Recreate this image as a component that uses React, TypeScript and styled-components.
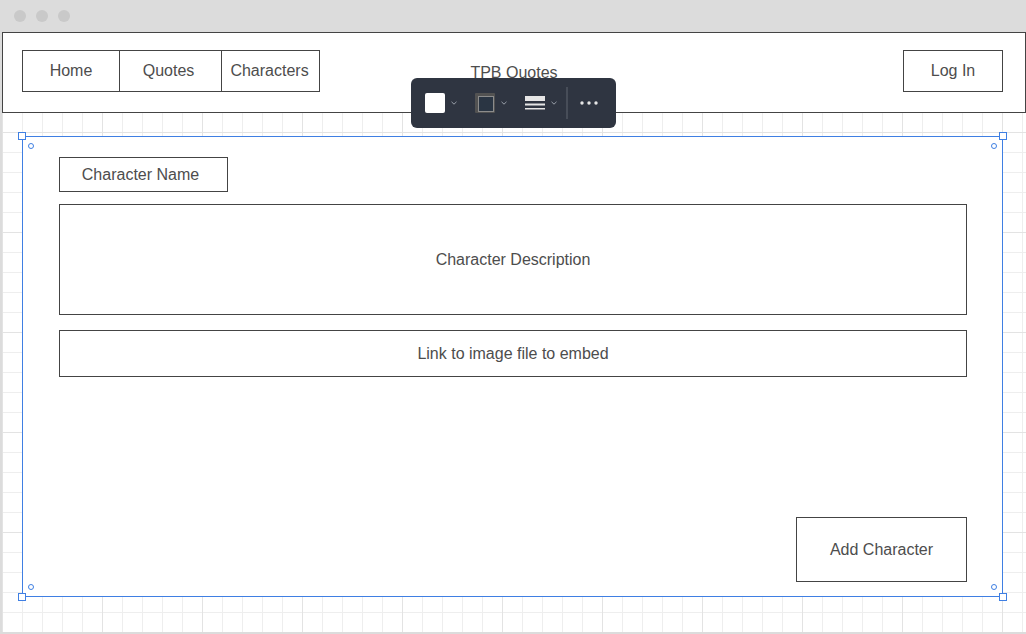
import styled, { createGlobalStyle } from "styled-components";

const GlobalStyle = createGlobalStyle`
  html, body {
    margin: 0;
    padding: 0;
    background: #ffffff;
  }
  * {
    box-sizing: border-box;
  }
`;

const Window = styled.div`
  width: 1026px;
  height: 634px;
  background: #dcdcdc;
  display: flex;
  flex-direction: column;
  padding: 0 0 2px 2px;
  font-family: "Liberation Sans", Arial, sans-serif;
  color: #4d4d4d;
  overflow: hidden;
`;

const TitleBar = styled.div`
  height: 32px;
  display: flex;
  align-items: center;
  gap: 10px;
  padding-left: 12px;
  padding-bottom: 1px;
  flex-shrink: 0;
`;

const Dot = styled.span`
  width: 12px;
  height: 12px;
  border-radius: 50%;
  background: #c9c9c9;
`;

const Canvas = styled.div`
  position: relative;
  flex: 1;
  display: flex;
  flex-direction: column;
  background-color: #ffffff;
  background-image:
    linear-gradient(to right, #e3e3e3 1px, transparent 1px),
    linear-gradient(to bottom, #e3e3e3 1px, transparent 1px),
    linear-gradient(to right, #eeeeee 1px, transparent 1px),
    linear-gradient(to bottom, #eeeeee 1px, transparent 1px);
  background-size: 100px 100px, 100px 100px, 20px 20px, 20px 20px;
  background-position: 0 0;
`;

const Header = styled.div`
  height: 81px;
  border: 1px solid #444444;
  background: #ffffff;
  display: flex;
  align-items: flex-start;
  justify-content: space-between;
  padding: 17px 22px 0 19px;
  position: relative;
  flex-shrink: 0;
`;

const Nav = styled.div`
  display: flex;
`;

const Box = styled.div<{ $w: number; $h: number }>`
  width: ${(p) => p.$w}px;
  height: ${(p) => p.$h}px;
  border: 1px solid #444444;
  background: #ffffff;
  display: flex;
  align-items: center;
  justify-content: center;
  font-size: 16px;
  color: #4d4d4d;
  flex-shrink: 0;
`;

const NavItem = styled(Box)<{ $shift?: number }>`
  padding-right: ${(p) => p.$shift ?? 0}px;
  & + & {
    margin-left: -1px;
  }
`;

const Title = styled.div`
  position: absolute;
  left: 0;
  right: 0;
  top: 0;
  bottom: 0;
  display: flex;
  align-items: center;
  justify-content: center;
  font-size: 16px;
  pointer-events: none;
`;

const Toolbar = styled.div`
  position: absolute;
  left: 409px;
  top: 46px;
  width: 205px;
  height: 50px;
  background: #2f3541;
  border-radius: 6px;
  display: flex;
  align-items: center;
  padding-left: 14px;
  z-index: 5;
`;

const ToolGroup = styled.div`
  display: flex;
  align-items: center;
  gap: 6px;
  margin-right: 18px;
  &:nth-of-type(3) {
    margin-right: 0;
  }
`;

const FillSwatch = styled.div`
  width: 20px;
  height: 20px;
  background: #ffffff;
  border-radius: 2px;
`;

const StrokeSwatch = styled.div`
  width: 20px;
  height: 20px;
  border-radius: 1px;
  background: #525252;
  padding: 3px;
  &::after {
    content: "";
    display: block;
    width: 100%;
    height: 100%;
    border: 1px solid #8c8c8c;
    background: #2a3543;
  }
`;

const Divider = styled.div`
  width: 2px;
  height: 32px;
  background: #474d58;
  margin: 0 12px 0 9px;
`;

const Chevron = () => (
  <svg width="6" height="4" viewBox="0 0 6 4">
    <path d="M0.5 0.8 L3 3.2 L5.5 0.8" fill="none" stroke="#9aa0aa" strokeWidth="1" />
  </svg>
);

const LinesIcon = () => (
  <svg width="20" height="16" viewBox="0 0 20 16">
    <rect x="0" y="1" width="20" height="5" fill="#e6e6e6" />
    <rect x="0" y="8.5" width="20" height="2" fill="#e6e6e6" />
    <rect x="0" y="13" width="20" height="1.5" fill="#e6e6e6" />
  </svg>
);

const DotsIcon = () => (
  <svg width="18" height="4" viewBox="0 0 18 4">
    <circle cx="2" cy="2" r="1.7" fill="#e6e6e6" />
    <circle cx="9" cy="2" r="1.7" fill="#e6e6e6" />
    <circle cx="16" cy="2" r="1.7" fill="#e6e6e6" />
  </svg>
);

const Frame = styled.div`
  position: relative;
  margin: 23px 0 0 20px;
  width: 981px;
  height: 461px;
  border: 1px solid #3f7fe3;
  background: #ffffff;
  display: flex;
  flex-direction: column;
  align-items: flex-start;
  padding: 20px 35px 14px 36px;
`;

const Handle = styled.span<{ $x: "left" | "right"; $y: "top" | "bottom" }>`
  position: absolute;
  width: 8px;
  height: 8px;
  border: 1px solid #3f7fe3;
  background: #ffffff;
  ${(p) => p.$x}: -5px;
  ${(p) => p.$y}: -5px;
`;

const Anchor = styled.span<{ $x: "left" | "right"; $y: "top" | "bottom" }>`
  position: absolute;
  width: 6px;
  height: 6px;
  border: 1px solid #3f7fe3;
  border-radius: 50%;
  background: #ffffff;
  ${(p) => p.$x}: 5px;
  ${(p) => p.$y}: 6px;
`;

const Field = styled(Box)<{ $gap: number; $shift?: number }>`
  margin-top: ${(p) => p.$gap}px;
  padding-right: ${(p) => p.$shift ?? 0}px;
`;

const SubmitRow = styled.div`
  margin-top: auto;
  align-self: flex-end;
`;

const corners: Array<["left" | "right", "top" | "bottom"]> = [
  ["left", "top"],
  ["right", "top"],
  ["left", "bottom"],
  ["right", "bottom"],
];

export default function App() {
  return (
    <>
      <GlobalStyle />
      <Window>
        <TitleBar>
          <Dot />
          <Dot />
          <Dot />
        </TitleBar>
        <Canvas>
          <Header>
            <Title>TPB Quotes</Title>
            <Nav>
              <NavItem $w={98} $h={42}>Home</NavItem>
              <NavItem $w={103} $h={42} $shift={4}>Quotes</NavItem>
              <NavItem $w={99} $h={42} $shift={2}>Characters</NavItem>
            </Nav>
            <Box $w={100} $h={42}>Log In</Box>
          </Header>

          <Toolbar>
            <ToolGroup>
              <FillSwatch />
              <Chevron />
            </ToolGroup>
            <ToolGroup>
              <StrokeSwatch />
              <Chevron />
            </ToolGroup>
            <ToolGroup>
              <LinesIcon />
              <Chevron />
            </ToolGroup>
            <Divider />
            <DotsIcon />
          </Toolbar>

          <Frame>
            {corners.map(([x, y]) => (
              <Handle key={`h-${x}-${y}`} $x={x} $y={y} />
            ))}
            {corners.map(([x, y]) => (
              <Anchor key={`a-${x}-${y}`} $x={x} $y={y} />
            ))}
            <Field $w={169} $h={35} $gap={0} $shift={6}>Character Name</Field>
            <Field $w={908} $h={111} $gap={12}>Character Description</Field>
            <Field $w={908} $h={47} $gap={15}>Link to image file to embed</Field>
            <SubmitRow>
              <Box $w={171} $h={65}>Add Character</Box>
            </SubmitRow>
          </Frame>
        </Canvas>
      </Window>
    </>
  );
}
